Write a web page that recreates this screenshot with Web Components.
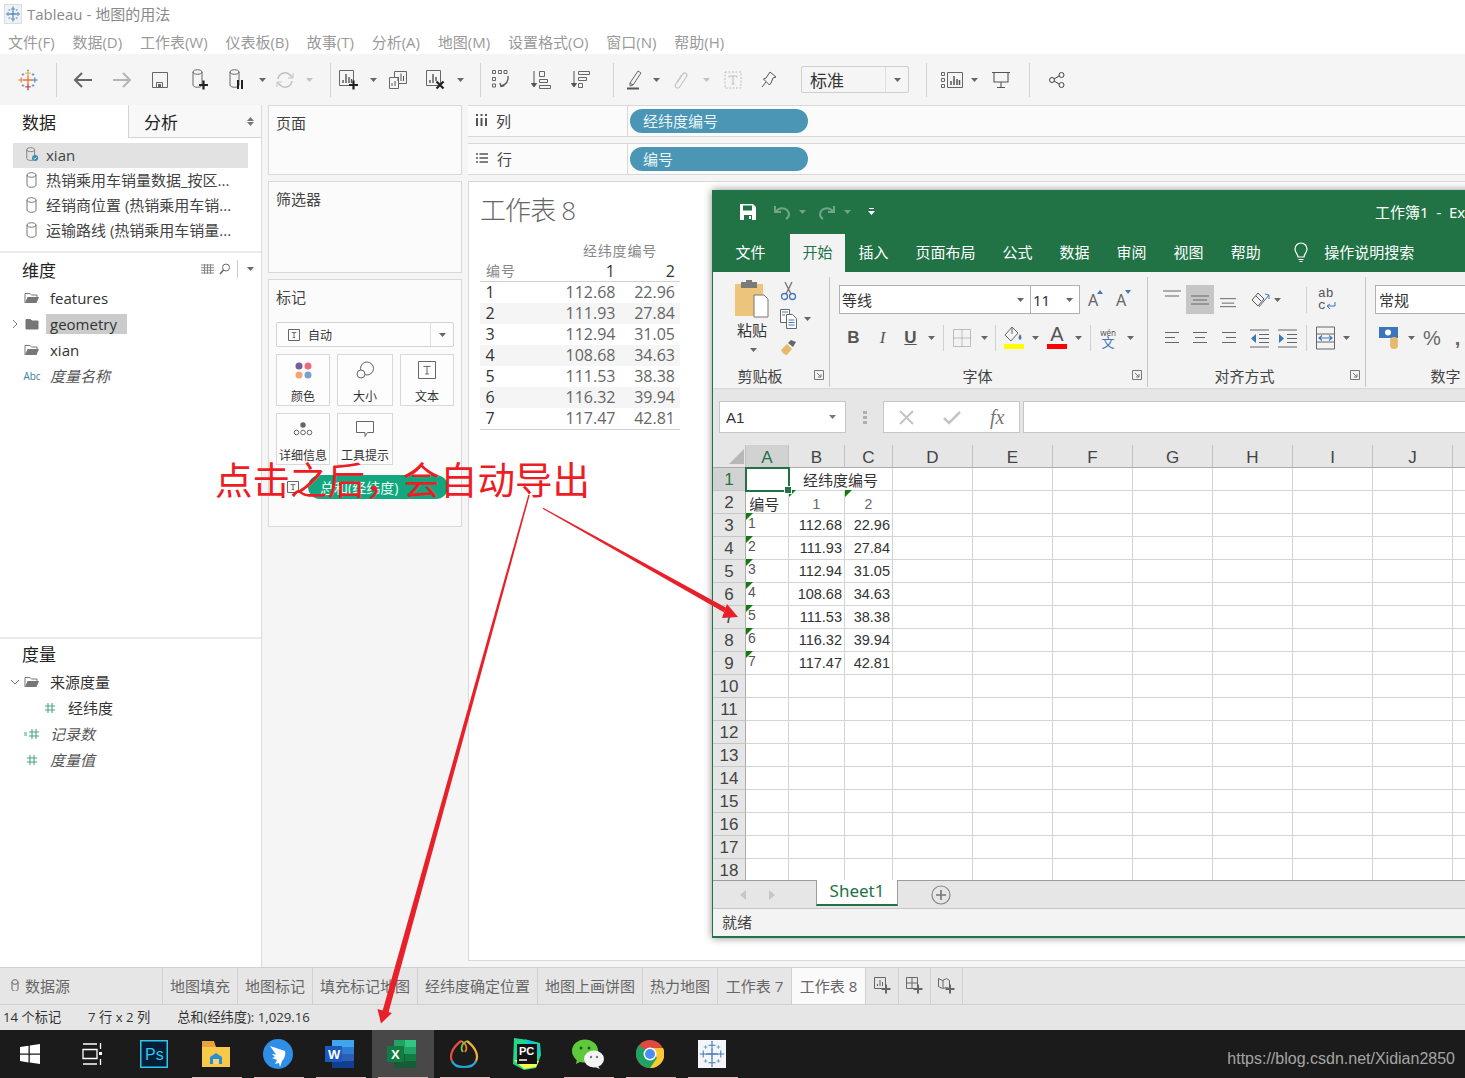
<!DOCTYPE html>
<html lang="zh">
<head>
<meta charset="utf-8">
<title>Tableau - 地图的用法</title>
<style>
  html, body { margin: 0; height: 100%; overflow: hidden; background: #f5f5f5; }
  body { font-family: "Open Sans", "Noto Sans CJK SC", sans-serif; color: #333; }
  tb-app { width: 1465px; height: 1078px; }
</style>
</head>
<body>
<tb-app></tb-app>
<script>
// helper: every part gets an open shadow root with its own style
class Part extends HTMLElement {
    constructor() {
        super();
        this.attachShadow({ mode: 'open' });
    }
    getStyles() { return ''; }
    getTemplate() { return ''; }
    connectedCallback() {
        this.shadowRoot.innerHTML = `<style>${this.getStyles()}</style>${this.getTemplate()}`;
    }
}

const svg = (w, h, body, extra = '') =>
    `<svg width="${w}" height="${h}" viewBox="0 0 ${w} ${h}" fill="none" ${extra}>${body}</svg>`;
const plus = (x, y, s, c, w = 1) =>
    `<path d="M${x - s} ${y}H${x + s}M${x} ${y - s}V${y + s}" stroke="${c}" stroke-width="${w}"/>`;
const caret = (c = '#666') => svg(7, 4, `<path d="M0 0h7l-3.5 4z" fill="${c}"/>`);

// tableau cross logo, c = [centre, top, left, right, bottom, small]
const tableauMark = (size, c) => svg(size, size, (() => {
    const m = size / 2, k = size / 24;
    return plus(m, m, 5 * k, c[0], 1.3) +
        plus(m, m - 7.5 * k, 3 * k, c[1], 1) + plus(m, m + 7.5 * k, 3 * k, c[4], 1) +
        plus(m - 7.5 * k, m, 3 * k, c[2], 1) + plus(m + 7.5 * k, m, 3 * k, c[3], 1) +
        plus(m - 5.5 * k, m - 6 * k, 1.5 * k, c[5], .8) + plus(m + 5.5 * k, m - 6 * k, 1.5 * k, c[5], .8) +
        plus(m - 5.5 * k, m + 6 * k, 1.5 * k, c[5], .8) + plus(m + 5.5 * k, m + 6 * k, 1.5 * k, c[5], .8) +
        plus(m, m - 10.5 * k, .8 * k, c[5], .8) + plus(m, m + 10.5 * k, .8 * k, c[5], .8);
})());

const cyl = (x, y, w, h, c = '#666') =>
    `<path d="M${x} ${y + 2}c0-3 ${w}-3 ${w} 0v${h}c0 3-${w} 3-${w} 0zM${x} ${y + 2}c0 3 ${w} 3 ${w} 0" stroke="${c}"/>`;

const toolIcons = {
    back: svg(22, 22, '<path d="M20 11H3M10 4l-7 7 7 7" stroke="#666" stroke-width="2"/>'),
    forward: svg(22, 22, '<path d="M2 11h17M12 4l7 7-7 7" stroke="#b4b4b4" stroke-width="2"/>'),
    save: svg(18, 18, '<path d="M1.500 1.500h15v15h-15zM5.500 16.500v-5h6v5" stroke="#666"/><path d="M7 13h3v3H7z" fill="#666"/>'),
    newData: svg(20, 22, cyl(3, 1, 9, 13) + plus(13.5, 16, 4.5, '#222', 2.2)),
    pause: svg(20, 22, cyl(3, 1, 9, 13) + '<path d="M11 11v9M15 11v9" stroke="#222" stroke-width="2"/>'),
    refresh: svg(20, 20, '<path d="M3 9a7 7 0 0 1 12-4l2 2M17 11a7 7 0 0 1-12 4l-2-2" stroke="#c2c2c2" stroke-width="1.600"/><path d="M18 3v5h-5M2 17v-5h5" stroke="#c2c2c2"/>'),
    newSheet: svg(22, 22, '<path d="M1.500 1.500h14v15h-14z" stroke="#666"/><path d="M5 14v-3M8 14V5M11 14V8M13.500 14v-4" stroke="#555" stroke-width="1.400"/>' + plus(15.5, 16, 4.5, '#222', 2.2)),
    dupSheet: svg(20, 20, '<path d="M6.500 1.500h12v12h-12z" stroke="#666" fill="#f5f5f5"/><path d="M1.500 7.500h9v11h-9z" stroke="#666" fill="#f5f5f5"/><path d="M10 11V7M13 11V3.500M15.500 11V6" stroke="#555"/><path d="M4 16v-3M7 16v-5" stroke="#555"/>'),
    clear: svg(22, 22, '<path d="M1.500 1.500h14v15h-14z" stroke="#666"/><path d="M5 14v-3M8 14V5M11 12V8" stroke="#555" stroke-width="1.400"/><path d="M11.500 12.500l7 7M18.500 12.500l-7 7" stroke="#222" stroke-width="2.200"/>'),
    swap: svg(20, 22, '<path d="M1.500 1.500h3v3h-3zM7.500 1.500h3v3h-3zM13 1.500h3v3h-3zM1.500 8.500h3v3h-3zM1.500 15h3v3h-3z" stroke="#666"/><path d="M17 7c1 5-2 9-7 10M9 14l1 3.500 3.500-.8" stroke="#555" stroke-width="1.300"/>'),
    sortUp: svg(20, 20, '<path d="M3 1v15M.5 13.500L3 17l2.500-3.500z" stroke="#555" fill="#555"/><path d="M8.500 1.500h5v5h-5zM8.500 9.500h8v3h-8zM8.500 15.500h11v3h-11z" stroke="#666"/>'),
    sortDown: svg(20, 20, '<path d="M3 1v15M.5 13.500L3 17l2.500-3.500z" stroke="#555" fill="#555"/><path d="M7.500 1.500h11v3h-11zM7.500 7.500h8v3h-8zM7.500 13.500h4v4h-4z" stroke="#666"/>'),
    mark: svg(20, 22, '<path d="M6 14L14 2l3 2-8 12-3 1zM6 14l3 2" stroke="#666"/><path d="M3 19.500h12" stroke="#555" stroke-width="2"/>'),
    clip: svg(16, 20, '<path d="M4 13l6-9c1.500-2 5-.5 3.500 2.500l-6.500 10c-2 3-6 1-4.500-2l6-9.500" stroke="#c8c8c8" stroke-width="1.300"/>'),
    tbox: svg(18, 18, '<path d="M1 1h16v16H1z" stroke="#bdbdbd" stroke-dasharray="2 1.500"/><path d="M5 5h8M9 5v8M7.500 13h3M5 5v1.500M13 5v1.500" stroke="#bdbdbd"/>'),
    pin: svg(16, 18, '<path d="M9 1l6 5-3 1-2 5-1.500 2-6-6L5 7l2-3zM5 11L1 16" stroke="#555"/>'),
    show: svg(22, 16, '<path d="M.5.500h3v3h-3zM.5 6.500h3v3h-3zM.5 12.500h3v3h-3zM6.500.500h15v15h-15z" stroke="#666"/><path d="M10 13V9M13 13V4M16 13V7M18.500 13V8" stroke="#555" stroke-width="1.500"/>'),
    present: svg(18, 18, '<path d="M0 1.500h18M2 1.500V11h14V1.500M9 11v5M5 16.500h8" stroke="#555" stroke-width="1.100"/>'),
    share: svg(16, 16, '<circle cx="3" cy="8" r="2.500" stroke="#444"/><circle cx="12.500" cy="3" r="2.500" stroke="#444"/><circle cx="12.500" cy="13" r="2.500" stroke="#444"/><path d="M5 7l5-3M5 9l5 3" stroke="#444"/>')
};

class TbTitlebar extends Part {
    getStyles() {
        return `
        :host { display: flex; height: 28px; align-items: center; background: #fff; padding-left: 4px; gap: 5px; color: #8a8a8a; font-size: 15px; }
        .ico { width: 16px; height: 18px; display: flex; align-items: center; justify-content: center; background: #eef2f6; border: 1px solid #ddd; }
        .tx { padding-bottom: 2px; }`;
    }
    getTemplate() {
        return `<span class="ico">${tableauMark(16, ['#5a87b8', '#5a87b8', '#5a87b8', '#5a87b8', '#5a87b8', '#7fa1c6'])}</span><span class="tx">Tableau - 地图的用法</span>`;
    }
}

class TbMenu extends Part {
    getStyles() {
        return `
        :host { display: flex; height: 26px; align-items: center; background: #fff; padding: 1px 0 0 8px; box-sizing: border-box; gap: 17.800px; color: #9a9a9a; font-size: 15px; white-space: nowrap; }`;
    }
    getTemplate() {
        return ['文件(F)', '数据(D)', '工作表(W)', '仪表板(B)', '故事(T)', '分析(A)', '地图(M)', '设置格式(O)', '窗口(N)', '帮助(H)']
            .map(t => `<span>${t}</span>`).join('');
    }
}

class TbToolbar extends Part {
    getStyles() {
        return `
        :host { display: flex; height: 51px; align-items: center; background: #f5f5f5; }
        .t { display: flex; align-items: center; justify-content: center; flex: none; }
        .t svg { flex: none; }
        .s { width: 1px; height: 34px; background: #d2d2d2; flex: none; }
        .combo { width: 108px; height: 27px; box-sizing: border-box; border: 1px solid #cfcfcf; border-radius: 2px; display: flex; flex: none; align-items: center; font-size: 17px; color: #333; margin-left: 4px; }
        .combo b { font-weight: 400; flex: 1; padding-left: 8px; }
        .combo i { width: 22px; height: 100%; border-left: 1px solid #dedede; display: flex; align-items: center; justify-content: center; }`;
    }
    getTemplate() {
        const t = (w, c) => `<span class="t" style="width:${w}px">${c}</span>`;
        const s = '<span class="s"></span>';
        const k = w => t(w, caret());
        const l = w => t(w, caret('#c4c4c4'));
        return t(55, tableauMark(22, ['#e8762c', '#e8a23c', '#e8762c', '#4e79a7', '#c72035', '#5a87b8'])) + t(1, '') + s +
            t(52, toolIcons.back) + t(26, toolIcons.forward) +
            t(50, toolIcons.save) + t(30, toolIcons.newData) + t(44, toolIcons.pause) + k(7) + t(38, toolIcons.refresh) + l(10) +
            t(16, '') + s + t(36, toolIcons.newSheet) + k(12) + t(38, toolIcons.dupSheet) + t(38, toolIcons.clear) + k(10) +
            t(15, '') + s + t(40, toolIcons.swap) + t(40, toolIcons.sortUp) + t(39, toolIcons.sortDown) +
            t(13, '') + s + t(40, toolIcons.mark) + k(4) + t(46, toolIcons.clip) + l(4) + t(50, toolIcons.tbox) + t(22, toolIcons.pin) +
            t(17, '') + `<span class="combo"><b>标准</b><i>${caret()}</i></span>` +
            t(17, '') + s + t(6, '') + t(38, toolIcons.show) + k(6) + t(48, toolIcons.present) + t(4, '') + s + t(54, toolIcons.share);
    }
}

const rowIcons = {
    db: svg(14, 16, cyl(2, 1, 9, 10, '#777')),
    dbOk: svg(16, 17, cyl(2, 1, 9, 10, '#777') + '<circle cx="11.500" cy="12.500" r="3.500" fill="#3d8bb0"/><path d="M9.800 12.500l1.300 1.300 2-2" stroke="#fff"/>'),
    open: svg(16, 12, '<path d="M1 11V1.500h5l1.500 1.500H13v2" stroke="#777"/><path d="M1 11l2.500-6H15l-2.500 6z" fill="#777"/>'),
    closed: svg(14, 12, '<path d="M1 11V1.500h4.500l1.500 1.500h6v8z" fill="#777" stroke="#777"/>'),
    hash: svg(12, 12, '<path d="M4 1v10M8 1v10M1 4h10M1 8h10" stroke="#4aa584" stroke-width="1.100"/>'),
    hashEq: svg(16, 12, '<path d="M8 1v10M12 1v10M5 4h10M5 8h10" stroke="#4aa584" stroke-width="1.100"/><path d="M0 5h3M0 7h3" stroke="#4aa584"/>'),
    chevR: svg(7, 10, '<path d="M1 1l4 4-4 4" stroke="#777"/>'),
    chevD: svg(10, 7, '<path d="M1 1l4 4 4-4" stroke="#777"/>')
};

// one row of the data pane: icon column + text
class TbField extends Part {
    getStyles() {
        const indent = this.getAttribute('indent') || 0;
        return `
        :host { display: flex; height: 26px; align-items: center; font-size: 15px; color: #333; padding-left: ${indent}px; white-space: nowrap; }
        .ch { width: 30px; display: flex; justify-content: center; }
        .ic { width: 18px; display: flex; justify-content: center; align-items: center; margin-left: -7px; }
        .tx { margin-left: 5px; padding: 0 4px; line-height: 20px; }
        :host([mark]) .tx { background: #cbcbcb; padding-right: 10px; }
        :host([calc]) .tx { font-style: italic; color: #555; }
        .abc { font-size: 10px; color: #3b7e9c; font-style: normal; }`;
    }
    getTemplate() {
        const ch = this.getAttribute('chev');
        const ic = this.getAttribute('icon');
        const icon = ic === 'abc' ? '<span class="abc">Abc</span>' : rowIcons[ic];
        return `<span class="ch">${ch ? rowIcons[ch] : ''}</span><span class="ic">${icon}</span><span class="tx"><slot></slot></span>`;
    }
}

class TbDataPane extends Part {
    getStyles() {
        return `
        :host { display: flex; flex-direction: column; width: 262px; flex: none; box-sizing: border-box; background: #fff; border-right: 1px solid #dcdcdc; }
        .tabs { display: flex; height: 33px; font-size: 17px; }
        .tabs span { display: flex; align-items: center; color: #222; padding-left: 22px; }
        .a { width: 128px; box-sizing: border-box; }
        .b { flex: 1; background: #f8f8f8; border-left: 1px solid #d4d4d4; border-bottom: 1px solid #d4d4d4; padding-left: 15px !important; position: relative; justify-content: space-between; }
        .b i { margin-right: 7px; display: flex; flex-direction: column; gap: 1px; }
        .ds { padding: 5px 13px 0; height: 115px; box-sizing: border-box; border-bottom: 2px solid #ebebeb; font-size: 15px; color: #444; }
        .ds div { height: 25px; box-sizing: border-box; padding: 0 0 2px 12px; display: flex; align-items: center; white-space: nowrap; gap: 7px; }
        .ds svg { flex: none; width: 14px; }
        .ds .on { background: #e2e2e2; }
        h3 { font-weight: 400; font-size: 17px; color: #222; margin: 0; height: 32px; display: flex; align-items: center; padding: 0 0 0 22px; box-sizing: border-box; }
        .mea h3 { height: 30px; padding-bottom: 2px; }
        .head { display: flex; justify-content: space-between; align-items: center; }
        .tools { display: flex; align-items: center; margin-right: 7px; gap: 5px; }
        .tools u { width: 1px; height: 18px; background: #ccc; margin: 0 4px 0 2px; }
        .dim { height: 386px; border-bottom: 2px solid #ebebeb; box-sizing: border-box; }
        .mea { flex: 1; }`;
    }
    getTemplate() {
        return `
        <div class="tabs"><span class="a">数据</span><span class="b">分析<i>${svg(7, 4, '<path d="M0 4h7L3.500 0z" fill="#777"/>')}${caret('#777')}</i></span></div>
        <div class="ds">
            <div class="on">${rowIcons.dbOk}<span>xian</span></div>
            <div>${rowIcons.db}<span>热销乘用车销量数据_按区...</span></div>
            <div>${rowIcons.db}<span>经销商位置 (热销乘用车销...</span></div>
            <div>${rowIcons.db}<span>运输路线 (热销乘用车销量...</span></div>
        </div>
        <div class="dim">
            <div class="head"><h3>维度</h3><span class="tools">
                ${svg(13, 10, '<path d="M0 1h13M0 3.700h13M0 6.300h13M0 9h13M3.500 0v10M6.500 0v10M9.500 0v10" stroke="#888"/>')}
                ${svg(11, 12, '<circle cx="7" cy="4.500" r="3.500" stroke="#666"/><path d="M4.500 7L1 11" stroke="#666" stroke-width="1.500"/>')}
                <u></u>${caret()}</span></div>
            <tb-field icon="open">features</tb-field>
            <tb-field icon="closed" chev="chevR" mark>geometry</tb-field>
            <tb-field icon="open">xian</tb-field>
            <tb-field icon="abc" calc>度量名称</tb-field>
        </div>
        <div class="mea">
            <h3>度量</h3>
            <tb-field icon="open" chev="chevD">来源度量</tb-field>
            <tb-field icon="hash" indent="18">经纬度</tb-field>
            <tb-field icon="hashEq" calc>记录数</tb-field>
            <tb-field icon="hash" calc>度量值</tb-field>
        </div>`;
    }
}

// titled box in the cards column
class TbCard extends Part {
    getStyles() {
        return `
        :host { display: block; box-sizing: border-box; border: 1px solid #d8d8d8; background: #fbfbfb; padding: 7px; height: ${this.getAttribute('h')}px; }
        h4 { font-weight: 400; font-size: 15px; color: #444; margin: 0; line-height: 20px; }`;
    }
    getTemplate() {
        return `<h4>${this.getAttribute('label')}</h4><slot></slot>`;
    }
}

class TbMarkBtn extends Part {
    getStyles() {
        return `
        :host { display: flex; flex-direction: column; align-items: center; box-sizing: border-box; width: ${this.getAttribute('w') || 54}px; height: 52px; border: 1px solid #d8d8d8; background: #fdfdfd; font-size: 12px; color: #333; white-space: nowrap; }
        .i { height: 33px; display: flex; align-items: center; justify-content: center; padding-top: 2px; box-sizing: border-box; }`;
    }
    getTemplate() {
        return `<span class="i"><slot name="icon"></slot></span><slot></slot>`;
    }
}

class TbMarks extends Part {
    getStyles() {
        return `
        :host { display: block; margin-top: 15px; }
        .dd { height: 25px; box-sizing: border-box; border: 1px solid #d4d4d4; border-radius: 2px; background: #fdfdfd; display: flex; align-items: center; font-size: 12px; color: #333; }
        .dd b { font-weight: 400; flex: 1; display: flex; align-items: center; gap: 8px; padding-left: 11px; }
        .dd i { width: 22px; height: 100%; border-left: 1px solid #e0e0e0; display: flex; align-items: center; justify-content: center; }
        .row { display: flex; gap: 7px; margin-top: 7px; }
        .pill { display: flex; align-items: center; margin: 10px 0 0 11px; }
        .pill span { width: 140px; height: 24px; margin-left: 9px; border-radius: 12px; background: #12a77f; color: #e8fff6; font-size: 14px; display: flex; align-items: center; box-sizing: border-box; padding-left: 12px; white-space: nowrap; }`;
    }
    getTemplate() {
        const tBox = s => svg(s, s, `<path d="M.5.500h${s - 1}v${s - 1}H.5z" stroke="#666"/><path d="M${s * .3} ${s * .3}h${s * .4}M${s / 2} ${s * .3}v${s * .42}M${s * .4} ${s * .72}h${s * .2}" stroke="#666"/>`);
        return `
        <div class="dd"><b>${tBox(12)}自动</b><i>${caret()}</i></div>
        <div class="row">
            <tb-mark-btn><span slot="icon">${svg(17, 17, '<circle cx="4" cy="4" r="3.500" fill="#7a5d93"/><circle cx="13" cy="4" r="3.500" fill="#f2697a"/><circle cx="4" cy="13" r="3.500" fill="#f3a770"/><circle cx="13" cy="13" r="3.500" fill="#7c9fcb"/>')}</span>颜色</tb-mark-btn>
            <tb-mark-btn w="56"><span slot="icon">${svg(18, 18, '<circle cx="11" cy="7.500" r="6.500" stroke="#666"/><circle cx="5" cy="13" r="4" stroke="#666" fill="#fdfdfd"/>')}</span>大小</tb-mark-btn>
            <tb-mark-btn><span slot="icon">${tBox(18)}</span>文本</tb-mark-btn>
        </div>
        <div class="row">
            <tb-mark-btn><span slot="icon">${svg(20, 14, '<circle cx="10" cy="3" r="2.700" fill="#666"/><circle cx="3.500" cy="10.500" r="2.300" stroke="#666"/><circle cx="10" cy="10.500" r="2.300" stroke="#666"/><circle cx="16.500" cy="10.500" r="2.300" stroke="#666"/>')}</span>详细信息</tb-mark-btn>
            <tb-mark-btn w="56"><span slot="icon">${svg(18, 17, '<path d="M.5.500h17v11h-6l-2.500 4v-4H.5z" stroke="#666"/>')}</span>工具提示</tb-mark-btn>
        </div>
        <div class="pill">${tBox(12)}<span>总和(经纬度)</span></div>`;
    }
}

class TbCards extends Part {
    getStyles() {
        return `
        :host { display: flex; flex-direction: column; gap: 6px; width: 194px; flex: none; margin-left: 6px; }`;
    }
    getTemplate() {
        return `
        <tb-card label="页面" h="70"></tb-card>
        <tb-card label="筛选器" h="92"></tb-card>
        <tb-card label="标记" h="248"><tb-marks></tb-marks></tb-card>`;
    }
}

class TbShelf extends Part {
    getStyles() {
        return `
        :host { display: flex; height: 32px; box-sizing: border-box; border-top: 1px solid #d8d8d8; border-bottom: 1px solid #d8d8d8; background: #fbfbfb; }
        .l { width: 160px; box-sizing: border-box; border-right: 1px solid #d8d8d8; display: flex; align-items: center; padding: 0 0 2px 8px; gap: 9px; font-size: 15px; color: #444; }
        .v { padding: 3px 0 0 2px; }
        .p { display: flex; align-items: center; width: 178px; height: 24px; border-radius: 12px; background: #4a96b4; color: #eaf5f9; font-size: 15px; padding: 0 0 1px 13px; box-sizing: border-box; }`;
    }
    getTemplate() {
        const icon = this.getAttribute('kind') === 'col'
            ? svg(11, 12, '<path d="M1 4v8M5.500 4v8M10 4v8" stroke="#555" stroke-width="2"/><path d="M0 1h2M4.500 1h2M9 1h2" stroke="#555" stroke-width="2"/>')
            : svg(12, 10, '<path d="M0 1h2M0 5h2M0 9h2M3.500 1H12M3.500 5H12M3.500 9H12" stroke="#555" stroke-width="1.600"/>');
        return `<div class="l">${icon}<span>${this.getAttribute('label')}</span></div><div class="v"><div class="p"><slot></slot></div></div>`;
    }
}

class TbView extends Part {
    getStyles() {
        return `
        :host { display: block; box-sizing: border-box; height: 780px; border: 1px solid #d8d8d8; background: #fff; padding: 10px 0 0 11px; }
        h1 { font-weight: 300; font-size: 26px; letter-spacing: -.9px; color: #666; margin: 0 0 13px; line-height: 36px; white-space: nowrap; }
        table { border-collapse: collapse; width: 200px; font-size: 16px; color: #666; table-layout: fixed; }
        th { font-weight: 400; padding: 0; line-height: 20px; }
        td { padding: 0 5px 0 5.500px; height: 21px; line-height: 21px; text-align: right; }
        td:first-child { text-align: left; color: #333; }
        .t th { font-size: 14px; color: #888; letter-spacing: .8px; height: 20px; text-align: left; padding-left: 103px; }
        .h th { height: 20px; text-align: right; padding-right: 5px; color: #333; border-bottom: 1px solid #d0d0d0; }
        .h th:first-child { font-size: 14px; text-align: left; padding-left: 6px; color: #888; letter-spacing: 1px; }
        tr.z td { background: #f5f5f5; }
        tbody tr:last-child td { border-bottom: 1px solid #d0d0d0; }`;
    }
    getTemplate() {
        const rows = [['112.68', '22.96'], ['111.93', '27.84'], ['112.94', '31.05'], ['108.68', '34.63'], ['111.53', '38.38'], ['116.32', '39.94'], ['117.47', '42.81']];
        return `
        <h1>工作表 8</h1>
        <table>
            <colgroup><col style="width:80px"><col style="width:60px"><col style="width:60px"></colgroup>
            <thead><tr class="t"><th colspan="3">经纬度编号</th></tr>
            <tr class="h"><th>编号</th><th>1</th><th>2</th></tr></thead>
            <tbody>${rows.map((r, i) => `<tr class="${i % 2 ? 'z' : ''}"><td>${i + 1}</td><td>${r[0]}</td><td>${r[1]}</td></tr>`).join('')}</tbody>
        </table>`;
    }
}

class TbTabs extends Part {
    getStyles() {
        return `
        :host { display: flex; height: 36px; background: #e6e6e6; border-top: 1px solid #d0d0d0; border-bottom: 1px solid #d0d0d0; font-size: 15px; color: #666; white-space: nowrap; }
        span { display: flex; align-items: center; justify-content: center; box-sizing: border-box; border-right: 1px solid #cfcfcf; height: 100%; gap: 5px; padding-bottom: 2px; }
        .src { justify-content: flex-start; padding-left: 11px; }
        .on { background: #fafafa; }`;
    }
    getTemplate() {
        const tabs = [['地图填充', 75], ['地图标记', 75], ['填充标记地图', 105], ['经纬度确定位置', 120], ['地图上画饼图', 105], ['热力地图', 75], ['工作表 7', 74], ['工作表 8', 74, 'on']];
        const p = (x, y) => plus(x, y, 4.5, '#666', 2);
        const add = [
            svg(17, 17, '<path d="M.5.500h11v11H.5zM3.500 9V7M6 9V3M8.500 9V5" stroke="#666"/>' + p(12, 12)),
            svg(17, 17, '<path d="M.5.500h11v11H.5zM.5 6h11M6 .500v11" stroke="#666"/>' + p(12, 12)),
            svg(17, 17, '<path d="M.5 1.500l4 2 4-2 3 2v8l-3-1-4 1-4-2zM5 3v8" stroke="#666"/>' + p(12, 12))
        ];
        return `<span class="src" style="width:163px">${svg(9, 12, cyl(1, 1, 6, 7, '#666'))}数据源</span>` +
            tabs.map(t => `<span class="${t[2] || ''}" style="width:${t[1]}px">${t[0]}</span>`).join('') +
            add.map((a, i) => `<span style="width:${i ? 32 : 33}px">${a}</span>`).join('');
    }
}

class TbStatus extends Part {
    getStyles() {
        return `
        :host { display: flex; height: 25px; box-sizing: border-box; background: #e6e6e6; align-items: center; font-size: 13.200px; color: #333; padding: 0 0 2px 3px; white-space: nowrap; }
        .b { margin-left: 27px; }`;
    }
    getTemplate() {
        return `<span>14 个标记</span><span class="b">7 行 x 2 列</span><span class="b">总和(经纬度): 1,029.16</span>`;
    }
}

class WinTaskbar extends Part {
    getStyles() {
        return `
        :host { display: flex; height: 48px; background: #1b1b1b; align-items: center; position: relative; }
        .i { width: 62px; height: 48px; flex: none; display: flex; align-items: center; justify-content: center; box-sizing: border-box; position: relative; padding-right: 3px; }
        .r::after { content: ''; position: absolute; left: 6px; right: 6px; bottom: 0; height: 1px; background: #e9b9bf; }
        .on { background: #484848; }
        .u { margin-left: auto; margin-right: 10px; color: #a5a5a5; font-size: 16px; font-family: "Liberation Sans", sans-serif; padding-top: 10px; }
        svg text { font-family: "Liberation Sans", sans-serif; font-weight: 700; }`;
    }
    getTemplate() {
        const win = svg(20, 20, '<path d="M0 3l8.500-1.300v7.800H0zM9.800 1.500L20 0v9.500H9.800zM0 10.800h8.500v7.600L0 17zM9.800 10.800H20V20L9.800 18.600z" fill="#fff"/>');
        const view = svg(20, 24, '<path d="M1 2h14M1 22h14M1 7.500h14v9H1z" stroke="#fff" stroke-width="1.300"/><path d="M18.500 1v6M18.500 17v6" stroke="#fff" stroke-width="1.300"/><path d="M17 10h3v3h-3z" fill="#fff"/>');
        const ps = svg(28, 28, '<path d="M0 0h28v28H0z" fill="#31c5f0"/><path d="M1.500 1.500h25v25h-25z" fill="#001e36"/><text x="5" y="20" font-size="16" fill="#31c5f0" style="font-weight:400">Ps</text>');
        const folder = svg(28, 28, '<path d="M0 4h11l3 3h14v20H0z" fill="#f7c948"/><path d="M0 1h12l2 6H0z" fill="#e8a33c"/><path d="M8 24v-7l6-4 6 4v7z" fill="#2c8dd6"/><path d="M11 24v-5h6v5z" fill="#f7d66d"/>');
        const ding = svg(30, 30, '<circle cx="15" cy="15" r="15" fill="#2f8fe8"/><path d="M7 7l15 5c1 4-1 8-3 10l-2 6-1-4-4 1 2-4-5-2 3-1-3-3 4 .5z" fill="#fff"/>');
        const word = svg(30, 30, '<path d="M7 1h22v28H7z" fill="#2a5fb4"/><path d="M7 1h22v7H7z" fill="#41a5ee"/><path d="M7 8h22v7H7z" fill="#2b7cd3"/><path d="M7 22h22v7H7z" fill="#103f91"/><path d="M0 7h17v16H0z" fill="#185abd"/><text x="3" y="20" font-size="13" fill="#fff">W</text>');
        const excel = svg(30, 30, '<path d="M7 1h22v28H7z" fill="#185c37"/><path d="M18 1h11v7H18z" fill="#33c481"/><path d="M7 1h11v7H7z" fill="#21a366"/><path d="M7 8h22v7H7z" fill="#21a366"/><path d="M18 15h11v7H18z" fill="#107c41"/><path d="M0 7h17v16H0z" fill="#107c41"/><text x="4" y="20" font-size="13" fill="#fff">X</text>');
        const ring = svg(30, 30, '<path d="M12 2C4 8 0 16 3 22" stroke="#e94e3d" stroke-width="2.200"/><path d="M3 22c3 8 21 8 24 0" stroke="#2aa7d8" stroke-width="2.200"/><path d="M27 22C30 16 26 8 18 2" stroke="#f2b134" stroke-width="2.200"/><path d="M12 2c5 2 7 7 4 11" stroke="#e97b3d" stroke-width="1.800"/><path d="M18 2c-5 2-7 7-4 11" stroke="#7fbf3f" stroke-width="1.800"/>');
        const pc = svg(30, 32, '<path d="M3 0l14 2 12 3 1 12-5 13-12 2-11-6z" fill="#21d789"/><path d="M14 1l14 6v10l-8-6z" fill="#07c3f2"/><path d="M3 22l10 9 12-2 3-6z" fill="#fcf84a"/><path d="M6 6h20v20H6z" fill="#111"/><text x="8" y="17" font-size="11" fill="#fff">PC</text><path d="M8 22h8" stroke="#fff" stroke-width="1.500"/>');
        const we = svg(32, 30, '<ellipse cx="13" cy="12" rx="13" ry="11.500" fill="#5fc83c"/><path d="M5 20l-1 5 6-3z" fill="#5fc83c"/><circle cx="9" cy="9" r="1.500" fill="#1b5d12"/><circle cx="17" cy="9" r="1.500" fill="#1b5d12"/><ellipse cx="22" cy="20" rx="10" ry="8.500" fill="#f4f4f4"/><path d="M26 27l2 3-5-2z" fill="#f4f4f4"/><circle cx="19" cy="18" r="1.200" fill="#777"/><circle cx="25" cy="18" r="1.200" fill="#777"/>');
        const chrome = svg(28, 28, '<circle cx="14" cy="14" r="14" fill="#dd4b3e"/><path d="M14 14L2 21A14 14 0 0 1 3 5z" fill="#1ea362"/><path d="M2 21a14 14 0 0 0 12 7c8 0 14-6 14-14 0-2-.5-4-1-6H14z" fill="#1ea362"/><path d="M14 8h13a14 14 0 0 1-13 20l7-10z" fill="#fcc934"/><circle cx="14" cy="14" r="6.500" fill="#fff"/><circle cx="14" cy="14" r="5" fill="#4c8bf5"/>');
        const tab = `<span style="display:flex;background:#f3f5f8">${tableauMark(28, ['#3f78b5', '#3f78b5', '#3f78b5', '#3f78b5', '#3f78b5', '#5a8fc4'])}</span>`;
        const items = [[win], [view], [ps], [folder, 'r'], [ding, 'r'], [word, 'r'], [excel, 'r on'], [ring, 'r'], [pc], [we, 'r'], [chrome, 'r'], [tab, 'r']];
        return items.map(it => `<span class="i ${it[1] || ''}">${it[0]}</span>`).join('') + '<span class="u">https://blog.csdn.net/Xidian2850</span>';
    }
}

// ---------- excel ----------
class XlTitle extends Part {
    getStyles() {
        return `
        :host { display: flex; height: 44px; background: #217346; align-items: center; color: #fff; font-size: 15px; padding-left: 27px; white-space: nowrap; }
        .u { display: flex; align-items: center; flex: none; }
        .n { margin-left: 500px; padding-bottom: 2px; }`;
    }
    getTemplate() {
        const dim = '#6fa588';
        return `${svg(16, 16, '<path d="M0 0h13l3 3v13H0z" fill="#fff"/><path d="M3 1.500h9v5H3zM4 11h8v5H4z" fill="#217346"/><path d="M9 12h2v3H9z" fill="#fff"/>')}
        <span class="u" style="margin-left:18px;width:44px;gap:8px">${svg(17, 15, `<path d="M1 1v6h6M2 6.500C6 1 14 3 15 9c0 2-1 4-3 5" stroke="${dim}" stroke-width="2"/>`)}${caret(dim)}</span>
        <span class="u" style="width:50px;gap:9px">${svg(17, 15, `<path d="M16 1v6h-6M15 6.500C11 1 3 3 2 9c0 2 1 4 3 5" stroke="${dim}" stroke-width="2"/>`)}${caret(dim)}</span>
        ${svg(7, 8, '<path d="M1 .500h5" stroke="#fff"/><path d="M0 3h7L3.500 7z" fill="#fff"/>')}
        <span class="n">工作簿1 &nbsp;-&nbsp; Excel</span>`;
    }
}

class XlTabs extends Part {
    getStyles() {
        return `
        :host { display: flex; height: 38px; background: #217346; color: #fff; font-size: 15px; padding-left: 9px; white-space: nowrap; }
        span { padding: 0 13.500px 4px; display: flex; align-items: center; height: 38px; box-sizing: border-box; }
        .f { margin-right: 11px; }
        .on { background: #f3f3f3; color: #217346; padding: 0 12.500px 4px; }
        .b { margin-left: 19px; padding: 0 15px 2px 0; }
        .s { padding: 0 0 4px; font-size: 15px; }`;
    }
    getTemplate() {
        return `<span class="f">文件</span><span class="on">开始</span>` +
            ['插入', '页面布局', '公式', '数据', '审阅', '视图', '帮助'].map(t => `<span>${t}</span>`).join('') +
            `<span class="b">${svg(16, 20, '<path d="M5 15c0-3-3-4-3-8a6 6 0 0 1 12 0c0 4-3 5-3 8zM5.500 17.500h5M6.500 19.500h3" stroke="#fff" stroke-width="1.200"/>')}</span><span class="s">操作说明搜索</span>`;
    }
}

class XlGroup extends Part {
    getStyles() {
        return `
        :host { display: block; position: relative; box-sizing: border-box; height: 110px; width: ${this.getAttribute('w')}px; flex: none; border-right: 1px solid #c6c6c6; margin-top: 5px; }
        .c { height: 89px; }
        .l { text-align: center; font-size: 15px; color: #444; line-height: 20px; height: 20px; }
        .k { position: absolute; right: 5px; bottom: 2px; }`;
    }
    getTemplate() {
        const k = this.hasAttribute('nolaunch') ? '' : `<span class="k">${svg(10, 10, '<path d="M.5 9.500V.500h9v9zM3 3l4 4M7 4v3H4" stroke="#777"/>')}</span>`;
        return `<div class="c"><slot></slot></div><div class="l" style="padding-right:${this.getAttribute('lp') || 0}px">${this.getAttribute('label')}</div>${k}`;
    }
}

class XlClipboard extends Part {
    getStyles() {
        return `
        :host { display: flex; padding: 3px 0 0 22px; }
        .p { width: 36px; text-align: center; font-size: 15px; color: #333; line-height: 20px; }
        .p svg { display: block; }
        .p i { display: block; margin: 8px auto 0; width: 7px; line-height: 0; }
        .s { display: flex; flex-direction: column; gap: 6px; margin-left: 9px; }
        .r { display: flex; align-items: center; gap: 7px; height: 22px; }`;
    }
    getTemplate() {
        return `
        <div class="p">${svg(34, 38, '<path d="M0 4h28v32H0z" fill="#ecc47c"/><path d="M6 2h16v6H6z" fill="#7a7a7a"/><path d="M11 0h6v4h-6z" fill="#7a7a7a"/><path d="M19 15h10l4 4v18H19z" fill="#fff" stroke="#777"/>')}<div style="margin-top:2px;margin-left:-2px">粘贴</div><i>${caret()}</i></div>
        <div class="s">
            <div class="r">${svg(17, 20, '<path d="M5 1l6 12M12 1L6 13" stroke="#777" stroke-width="1.400"/><circle cx="4.500" cy="15.500" r="3" stroke="#4477b7" stroke-width="1.300"/><circle cx="12.500" cy="15.500" r="3" stroke="#4477b7" stroke-width="1.300"/>')}</div>
            <div class="r">${svg(17, 20, '<path d="M.5.500h9v13h-9z" stroke="#666" fill="#fff"/><path d="M6.500 5.500h6l4 4v10h-10z" stroke="#666" fill="#fff"/><path d="M2 3h6M2 6h3M8.500 11h6M8.500 13.500h6M8.500 16h6" stroke="#4477b7"/>')}${caret()}</div>
            <div class="r">${svg(17, 17, '<path d="M1 11l6-6 5 5-5 6c-2 0-5-2-6-5z" fill="#e8b96c"/><path d="M8 4l3-3 5 2-3 5z" fill="#666"/>')}</div>
        </div>`;
    }
}

class XlFont extends Part {
    getStyles() {
        return `
        :host { display: block; padding: 8px 0 0 9px; font-size: 15px; color: #333; }
        .a { display: flex; align-items: center; }
        .box { height: 29px; box-sizing: border-box; border: 1px solid #b0b0b0; background: #fff; display: flex; align-items: center; justify-content: space-between; padding: 0 6px 0 2px; font-size: 15px; }
        .grow { font-family: "Noto Sans", sans-serif; font-size: 16px; color: #666; position: relative; display: flex; width: 28px; justify-content: center; }
        .b { display: flex; align-items: center; margin-top: 12px; height: 23px; }
        .b > * { flex: none; display: flex; justify-content: center; align-items: center; }
        .b svg { flex: none; }
        .m { font-family: "Liberation Sans", sans-serif; font-size: 17px; color: #555; width: 29px; }
        .s { width: 1px; height: 26px; background: #d0d0d0; }`;
    }
    getTemplate() {
        const k = w => `<span style="width:${w}px">${caret()}</span>`;
        return `
        <div class="a"><span class="box" style="width:192px">等线${caret()}</span><span class="box" style="width:50px;margin-left:-1px">11${caret()}</span>
            <span class="grow" style="margin-left:-1px">A${svg(6, 4, '<path d="M0 4h6L3 0z" fill="#4477b7"/>', 'style="position:absolute;top:1px;right:4px"')}</span>
            <span class="grow">A${svg(6, 4, '<path d="M0 0h6L3 4z" fill="#4477b7"/>', 'style="position:absolute;top:1px;right:4px"')}</span></div>
        <div class="b">
            <span class="m" style="font-weight:700">B</span><span class="m" style="font-style:italic;font-family:'Liberation Serif'">I</span><span class="m" style="text-decoration:underline;font-weight:700;width:27px">U</span>${k(14)}
            <span style="width:5px"></span><span class="s"></span>
            <span style="width:36px">${svg(18, 18, '<path d="M.5.500h17v17H.5zM.5 9h17M9 .500v17" stroke="#888" stroke-dasharray="1 1"/>')}</span>${k(8)}
            <span style="width:7px"></span><span class="s"></span>
            <span style="width:36px">${svg(20, 24, '<path d="M8 1L1 9l6 6 7-8zM8 1v7" stroke="#666"/><path d="M16 8c2 3 2 5 0 6-2-1-2-3 0-6z" fill="#4477b7"/><path d="M0 18h20v5H0z" fill="#ff0"/>')}</span>${k(6)}
            <span style="width:38px;flex-direction:column;font-family:'Liberation Sans';font-size:20px;color:#555;line-height:15px">A<i style="display:block;width:20px;height:5px;background:#f00;margin-top:2px"></i></span>${k(4)}
            <span style="width:10px"></span><span class="s"></span>
            <span style="width:34px;flex-direction:column;font-size:8px;line-height:9px;color:#555">wén<b style="color:#4477b7;font-weight:400;font-size:13px;line-height:11px">文</b></span>${k(10)}
        </div>`;
    }
}

class XlAlign extends Part {
    getStyles() {
        return `
        :host { display: block; padding: 8px 0 0 0; }
        .r { display: flex; align-items: center; }
        .r > * { flex: none; display: flex; align-items: center; justify-content: center; }
        .a { height: 29px; }
        .b { height: 24px; margin-top: 12px; }
        .sel { background: #c6c6c6; height: 29px; }
        .s { width: 1px; height: 26px; background: #d0d0d0; }`;
    }
    getTemplate() {
        const top = svg(18, 24, '<path d="M0 3h18M2 8h14" stroke="#666" stroke-width="1.100"/>');
        const mid = svg(18, 24, '<path d="M0 8h18M2 12h14M0 16h18" stroke="#666" stroke-width="1.100"/>');
        const bot = svg(18, 24, '<path d="M0 10.500h18M2 15.500h14M0 19.500h18" stroke="#666" stroke-width="1.100"/>');
        const orient = svg(20, 20, '<path d="M2 10l6-7 6 6-6 7zM6 6l5 5" stroke="#555"/><path d="M9 17L19 5M15 4l4 1v4" stroke="#4477b7"/>');
        const ind = (d) => svg(19, 19, `<path d="M0 1h19M9 5.500h10M9 9.500h10M9 13.500h10M0 18h19" stroke="#666" stroke-width="1.200"/>` + (d ? '<path d="M6 5L1 9.500 6 14z" fill="#3c76ba"/>' : '<path d="M1 5l5 4.500L1 14z" fill="#3c76ba"/>'));
        const merge = svg(19, 24, '<path d="M.5 1h18v22H.5zM.5 8h18M.5 16h18" stroke="#666"/><path d="M3 12h13M6 9.500L3 12l3 2.500M13 9.500l3 2.500-3 2.500" stroke="#3c76ba" stroke-width="1.200"/>');
        const wrap = `<span style="flex-direction:column;width:20px;font-family:'Liberation Mono';font-size:13px;line-height:12px;color:#555;align-items:flex-start">ab<span style="display:flex;align-items:center">c${svg(10, 8, '<path d="M9 0v4H2M4 2L1 4l3 3" stroke="#3c76ba"/>')}</span></span>`;
        const al = d => svg(14, 16, `<path d="${d}" stroke="#666" stroke-width="1.200"/>`);
        return `
        <div class="r a">
            <span style="width:15px"></span><span style="width:18px">${top}</span><span style="width:5px"></span>
            <span class="sel" style="width:28px">${mid}</span><span style="width:6px"></span><span style="width:16px">${bot}</span>
            <span style="width:14px"></span><span style="width:20px">${orient}</span><span style="width:4px"></span>${caret()}
            <span style="width:25px"></span><span class="s"></span><span style="width:11px"></span>${wrap}
        </div>
        <div class="r b">
            <span style="margin-left:17px">${al('M0 2.500h14M0 7.500h10M0 12.500h14')}</span>
            <span style="margin-left:14px">${al('M0 2.500h14M2 7.500h10M0 12.500h14')}</span>
            <span style="margin-left:15px">${al('M0 2.500h14M4 7.500h10M0 12.500h14')}</span>
            <span style="margin-left:14px">${ind(true)}</span><span style="margin-left:9px">${ind(false)}</span>
            <span style="width:9px"></span><span class="s"></span><span style="width:9px"></span>${merge}<span style="width:8px"></span>${caret()}
        </div>`;
    }
}

class XlNumber extends Part {
    getStyles() {
        return `
        :host { display: block; padding: 8px 0 0 9px; font-size: 15px; color: #333; }
        .box { width: 200px; height: 29px; box-sizing: border-box; border: 1px solid #b0b0b0; background: #fff; display: flex; align-items: center; padding-left: 3px; }
        .r { display: flex; align-items: center; margin-top: 12px; height: 24px; font-family: "Liberation Sans", sans-serif; font-size: 20px; color: #666; }`;
    }
    getTemplate() {
        return `<div class="box">常规</div>
        <div class="r" style="padding-left:4px">${svg(21, 22, '<path d="M0 0h19v11H0z" fill="#3c76ba"/><circle cx="9" cy="5.500" r="3" fill="#fff"/><circle cx="15" cy="14" r="4" fill="#e8b96c"/><circle cx="15" cy="18" r="4" fill="#e8b96c"/>')}
        <span style="margin:0 0 0 8px;display:flex">${caret()}</span><span style="margin-left:8px">%</span><b style="margin-left:14px">,</b></div>`;
    }
}

class XlRibbon extends Part {
    getStyles() {
        return `
        :host { display: flex; height: 117px; background: #f3f3f3; border-bottom: 1px solid #d8d8d8; box-sizing: border-box; }`;
    }
    getTemplate() {
        return `
        <xl-group w="117" label="剪贴板" lp="22"><xl-clipboard></xl-clipboard></xl-group>
        <xl-group w="318" label="字体" lp="22"><xl-font></xl-font></xl-group>
        <xl-group w="218" label="对齐方式" lp="24"><xl-align></xl-align></xl-group>
        <xl-group w="200" label="数字" lp="40" nolaunch><xl-number></xl-number></xl-group>`;
    }
}

class XlFormula extends Part {
    getStyles() {
        return `
        :host { display: flex; height: 56px; background: #e6e6e6; padding: 12px 0 0 6px; box-sizing: border-box; font-family: "Liberation Sans", sans-serif; }
        .n { width: 127px; height: 32px; box-sizing: border-box; border: 1px solid #c6c6c6; background: #fff; display: flex; align-items: center; justify-content: space-between; padding: 0 9px 0 6px; font-size: 15px; color: #333; }
        .d { width: 37px; display: flex; flex-direction: column; align-items: center; justify-content: center; height: 32px; gap: 2px; }
        .d i { width: 4px; height: 3px; background: #b0b0b0; }
        .f { width: 137px; height: 32px; box-sizing: border-box; border: 1px solid #c6c6c6; background: #fff; display: flex; align-items: center; padding-left: 15px; gap: 29px; }
        .f em { font-family: "Liberation Serif", serif; font-size: 20px; color: #777; }
        .i { flex: 1; margin-left: 3px; height: 32px; box-sizing: border-box; border: 1px solid #c6c6c6; background: #fff; }`;
    }
    getTemplate() {
        return `
        <div class="n">A1${caret('#777')}</div>
        <div class="d"><i></i><i></i><i></i></div>
        <div class="f">${svg(15, 15, '<path d="M1 1l13 13M14 1L1 14" stroke="#c4c4c4" stroke-width="2"/>')}${svg(18, 15, '<path d="M1 8l5 5L17 2" stroke="#c4c4c4" stroke-width="2.500"/>')}<em>fx</em></div>
        <div class="i"></div>`;
    }
}

class XlGrid extends Part {
    getStyles() {
        return `
        :host { display: block; height: 435px; overflow: hidden; background: #fff; font-family: "Liberation Sans", sans-serif; font-size: 14.500px; color: #333; }
        .g { display: grid; grid-template-columns: 33px 43px 56px 48px repeat(8, 80px); grid-auto-rows: 23px; }
        .g > div { box-sizing: border-box; border-right: 1px solid #d4d4d4; border-bottom: 1px solid #d4d4d4; position: relative; display: flex; align-items: center; white-space: nowrap; overflow: visible; }
        .g > .ch { background: #e6e6e6; justify-content: center; font-size: 17px; color: #444; border-right-color: #c2c2c2; border-bottom: 1px solid #ababab; height: 23px; padding-top: 3px; }
        .g > .rh { background: #e6e6e6; justify-content: center; font-size: 17px; color: #444; border-right: 1px solid #ababab; border-bottom-color: #c6c6c6; padding-top: 2px; }
        .g > .sel { background: #d2d2d2; color: #217346; }
        .g > .corner { padding-top: 0; }
        .r { justify-content: flex-end; padding: 0 2px 0 0; }
        .m { justify-content: center; color: #666; padding-top: 3px; font-size: 14px; }
        .cn { font-family: "Noto Sans CJK SC", sans-serif; font-size: 15px; padding-top: 3px; }
        .mg { grid-column: span 2; justify-content: center; font-family: "Noto Sans CJK SC", sans-serif; font-size: 15px; }
        .a { padding: 0 0 4px 2px; color: #555; font-size: 14px; }
        .tri::before { content: ''; position: absolute; left: 0; top: -1px; border-style: solid; border-width: 7px 7px 0 0; border-color: #107c10 transparent transparent transparent; z-index: 2; }
        .cur { outline: 2px solid #217346; outline-offset: -1px; z-index: 3; }
        .cur::after { content: ''; position: absolute; right: -4px; bottom: -4px; width: 6px; height: 6px; background: #217346; border: 1px solid #fff; }`;
    }
    getTemplate() {
        const rows = [['112.68', '22.96'], ['111.93', '27.84'], ['112.94', '31.05'], ['108.68', '34.63'], ['111.53', '38.38'], ['116.32', '39.94'], ['117.47', '42.81']];
        const tail = '<div></div>'.repeat(8);
        const cols = ['A', 'B', 'C', 'D', 'E', 'F', 'G', 'H', 'I', 'J', 'K'];
        let html = `<div class="ch corner">${svg(15, 15, '<path d="M15 0v15H0z" fill="#b8b8b8"/>', 'style="margin-left:14px"')}</div>`;
        html += cols.map((c, i) => `<div class="ch ${i ? '' : 'sel'}">${c}</div>`).join('');
        html += `<div class="rh sel">1</div><div class="cur"></div><div class="mg">经纬度编号</div>${tail}`;
        html += `<div class="rh">2</div><div class="cn">&nbsp;编号</div><div class="m tri">1</div><div class="m tri">2</div>${tail}`;
        for (let i = 0; i < 16; i++) {
            const r = rows[i];
            html += `<div class="rh">${i + 3}</div>`;
            html += r
                ? `<div class="a tri">${i + 1}</div><div class="r">${r[0]}</div><div class="r">${r[1]}</div>`
                : '<div></div><div></div><div></div>';
            html += tail;
        }
        return `<div class="g">${html}</div>`;
    }
}

class XlSheets extends Part {
    getStyles() {
        return `
        :host { display: flex; height: 29px; box-sizing: border-box; background: #e6e6e6; border-top: 1px solid #9c9c9c; border-bottom: 1px solid #c6c6c6; position: relative; }
        .n { width: 103px; box-sizing: border-box; display: flex; align-items: center; padding-left: 27px; gap: 23px; }
        .t { width: 82px; height: 26px; margin-top: -1px; padding-bottom: 3px; background: #fff; border-left: 1px solid #9c9c9c; border-right: 1px solid #9c9c9c; border-bottom: 2px solid #217346; box-sizing: border-box; color: #217346; font-family: "Noto Sans", sans-serif; font-size: 17px; display: flex; align-items: center; justify-content: center; }
        .p { margin-left: 33px; display: flex; align-items: center; }`;
    }
    getTemplate() {
        return `<div class="n">${svg(6, 10, '<path d="M6 0v10L0 5z" fill="#c6c6c6"/>')}${svg(6, 10, '<path d="M0 0v10l6-5z" fill="#c6c6c6"/>')}</div>
        <div class="t">Sheet1</div>
        <div class="p">${svg(20, 20, '<circle cx="10" cy="10" r="9" stroke="#888" stroke-width="1.200"/><path d="M5 10h10M10 5v10" stroke="#777" stroke-width="1.600"/>')}</div>`;
    }
}

class XlWindow extends Part {
    getStyles() {
        return `
        :host { position: absolute; left: 712px; top: 190px; width: 860px; height: 747.500px; box-sizing: border-box; display: block; border-left: 1px solid #217346; border-bottom: 2px solid #217346; background: #f3f3f3; box-shadow: 0 0 8px rgba(0,0,0,.45); font-family: "Noto Sans", "Noto Sans CJK SC", sans-serif; }
        .st { height: 28px; box-sizing: border-box; padding: 0 0 3px 9px; font-size: 15px; color: #444; display: flex; align-items: center; font-family: "Noto Sans CJK SC", sans-serif; }`;
    }
    getTemplate() {
        return `<xl-title></xl-title><xl-tabs></xl-tabs><xl-ribbon></xl-ribbon><xl-formula></xl-formula><xl-grid></xl-grid><xl-sheets></xl-sheets><div class="st">就绪</div>`;
    }
}

// red note drawn over the screenshot
class RedNote extends Part {
    getStyles() {
        return `
        :host { position: absolute; inset: 0; display: block; pointer-events: none; }
        .t { position: absolute; left: 215px; top: 451px; font-family: "Noto Sans CJK SC", sans-serif; font-size: 37.500px; line-height: 54px; color: #ee1c25; white-space: nowrap; }
        svg { position: absolute; left: 0; top: 0; }`;
    }
    getTemplate() {
        return `<span class="t">点击之后，会自动导出</span>
        ${svg(1465, 1078, `
            <path d="M529.700 495.200L528.300 494.800L382.500 1011L388.500 1012.500z" fill="#e8202a"/>
            <path d="M381 1023.500L377.500 1009L392 1013z" fill="#e8202a"/>
            <path d="M543.300 507.800L542.700 508.800L723.800 612.200L726.200 607.800z" fill="#e8202a"/>
            <path d="M738 617L727 604L722 618z" fill="#e8202a"/>`)}`;
    }
}

class TbApp extends Part {
    getStyles() {
        return `
        :host { display: flex; flex-direction: column; position: relative; overflow: hidden; }
        main { display: flex; height: 862px; background: #f5f5f5; }
        .right { width: 1000px; margin-left: 6px; display: flex; flex-direction: column; gap: 6px; flex: none; }`;
    }
    getTemplate() {
        return `
        <tb-titlebar></tb-titlebar>
        <tb-menu></tb-menu>
        <tb-toolbar></tb-toolbar>
        <main>
            <tb-data-pane></tb-data-pane>
            <tb-cards></tb-cards>
            <div class="right">
                <tb-shelf kind="col" label="列">经纬度编号</tb-shelf>
                <tb-shelf kind="row" label="行">编号</tb-shelf>
                <tb-view></tb-view>
            </div>
        </main>
        <tb-tabs></tb-tabs>
        <tb-status></tb-status>
        <win-taskbar></win-taskbar>
        <xl-window></xl-window>
        <red-note></red-note>`;
    }
}

const parts = {
    'tb-titlebar': TbTitlebar, 'tb-menu': TbMenu, 'tb-toolbar': TbToolbar, 'tb-field': TbField,
    'tb-data-pane': TbDataPane, 'tb-card': TbCard, 'tb-mark-btn': TbMarkBtn, 'tb-marks': TbMarks,
    'tb-cards': TbCards, 'tb-shelf': TbShelf, 'tb-view': TbView, 'tb-tabs': TbTabs, 'tb-status': TbStatus,
    'win-taskbar': WinTaskbar, 'xl-title': XlTitle, 'xl-tabs': XlTabs, 'xl-group': XlGroup,
    'xl-clipboard': XlClipboard, 'xl-font': XlFont, 'xl-align': XlAlign, 'xl-number': XlNumber,
    'xl-ribbon': XlRibbon, 'xl-formula': XlFormula, 'xl-grid': XlGrid, 'xl-sheets': XlSheets,
    'xl-window': XlWindow, 'red-note': RedNote, 'tb-app': TbApp
};
Object.keys(parts).forEach(n => customElements.define(n, parts[n]));
</script>
</body>
</html>
